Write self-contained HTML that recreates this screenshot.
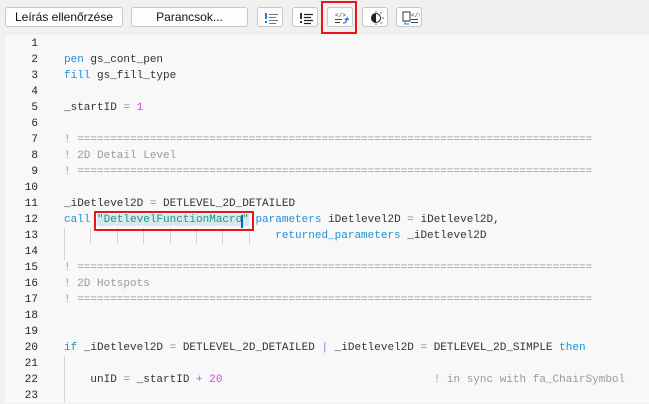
<!DOCTYPE html>
<html><head><meta charset="utf-8"><style>
body{margin:0;width:649px;height:403px;background:#f0f0f0;position:relative;overflow:hidden;font-family:"Liberation Sans",sans-serif}
.btn{position:absolute;top:7px;height:20px;background:#fdfdfd;border:1px solid #c8c8c8;border-radius:3px;box-sizing:border-box;font-size:12px;color:#111;text-align:center;line-height:18px}
.ib{width:26px}
.ib svg{position:absolute;left:5px;top:3px}
#ed{position:absolute;left:5px;top:35px;width:644px;height:368px;background:#f8f8f8}
.ln{position:absolute;left:0;width:33px;text-align:right;font:11px/16px "Liberation Mono",monospace;color:#222}
.cd{position:absolute;left:59px;font:11px/16px "Liberation Mono",monospace;color:#333;white-space:pre}
.k{color:#1b93d8}.n{color:#e23de0}.c{color:#9a9a9a}.s{color:#1a9a7a;background:#d8e8f3}.o{color:#a070d0}
.g{position:absolute;width:1px;background:#d4d4d4}
</style></head><body>
<div class="btn" style="left:5px;width:118px">Leírás ellenőrzése</div>
<div class="btn" style="left:131px;width:117px">Parancsok...</div>
<div class="btn ib" style="left:257px"><svg width="16" height="14"><rect x="2" y="2" width="2" height="6" fill="#1e7be0"/><rect x="2" y="10" width="2" height="2" fill="#1e7be0"/><g stroke="#777" stroke-width="1"><line x1="6" y1="3.5" x2="15" y2="3.5"/><line x1="6" y1="6.5" x2="13" y2="6.5"/><line x1="6" y1="9.5" x2="15" y2="9.5"/><line x1="6" y1="12.5" x2="13" y2="12.5"/></g></svg></div>
<div class="btn ib" style="left:292px"><svg width="16" height="14"><rect x="2" y="2" width="2" height="6" fill="#333"/><rect x="2" y="10" width="2" height="2" fill="#333"/><g stroke="#222" stroke-width="1.2"><line x1="6" y1="3.5" x2="15" y2="3.5"/><line x1="6" y1="6.5" x2="13" y2="6.5"/><line x1="6" y1="9.5" x2="15" y2="9.5"/><line x1="6" y1="12.5" x2="13" y2="12.5"/></g></svg></div>
<div style="position:absolute;left:321px;top:1px;width:36px;height:33px;border:2px solid #e8141c;box-sizing:border-box"></div>
<div class="btn ib" style="left:327px"><svg width="16" height="14"><text x="2" y="6" font-size="6" font-family="Liberation Mono" fill="#333">&lt;/&gt;</text><g stroke="#444"><line x1="2" y1="8.5" x2="9" y2="8.5"/><line x1="2" y1="11.5" x2="7" y2="11.5"/></g><path d="M10 12 q4 0 4-5 l-2 2 m2-2 l2 2" stroke="#1e7be0" fill="none" stroke-width="1.2"/></svg></div>
<div class="btn ib" style="left:362px"><svg width="16" height="14"><circle cx="8" cy="7" r="4.5" fill="none" stroke="#222"/><path d="M8 2.5a4.5 4.5 0 0 0 0 9z" fill="#222"/><g stroke="#555"><line x1="14" y1="7" x2="16" y2="7"/><line x1="8" y1="0" x2="8" y2="1.5"/><line x1="8" y1="12.5" x2="8" y2="14"/><line x1="12.5" y1="2.5" x2="13.5" y2="1.5"/><line x1="12.5" y1="11.5" x2="13.5" y2="12.5"/></g></svg></div>
<div class="btn ib" style="left:396px"><svg width="18" height="15"><rect x="1" y="1" width="7" height="9" fill="none" stroke="#333"/><path d="M3 10v3h4" stroke="#1e7be0" fill="none"/><text x="9" y="6" font-size="6" font-family="Liberation Mono" fill="#333">&lt;/&gt;</text><g stroke="#444"><line x1="9" y1="8.5" x2="16" y2="8.5"/><line x1="9" y1="11.5" x2="16" y2="11.5"/></g></svg></div>
<div id="ed">
<div class="ln" style="top:1px">1<br>2<br>3<br>4<br>5<br>6<br>7<br>8<br>9<br>10<br>11<br>12<br>13<br>14<br>15<br>16<br>17<br>18<br>19<br>20<br>21<br>22<br>23</div>
<div class="g" style="left:59px;top:193px;height:32px"></div>
<div class="g" style="left:85px;top:193px;height:16px"></div><div class="g" style="left:112px;top:193px;height:16px"></div><div class="g" style="left:138px;top:193px;height:16px"></div><div class="g" style="left:165px;top:193px;height:16px"></div><div class="g" style="left:191px;top:193px;height:16px"></div><div class="g" style="left:217px;top:193px;height:16px"></div><div class="g" style="left:244px;top:193px;height:16px"></div>
<div class="g" style="left:59px;top:321px;height:47px"></div>
<div class="cd" style="top:1px">
<span class="k">pen</span> gs_cont_pen
<span class="k">fill</span> gs_fill_type

_startID <span class="o">=</span> <span class="n">1</span>

<span class="c">! ==============================================================================
! 2D Detail Level
! ==============================================================================</span>

_iDetlevel2D <span class="o">=</span> DETLEVEL_2D_DETAILED
<span class="k">call</span> <span class="s">"DetlevelFunctionMacro"</span> <span class="k">parameters</span> iDetlevel2D <span class="o">=</span> iDetlevel2D,
                                <span class="k">returned_parameters</span> _iDetlevel2D

<span class="c">! ==============================================================================
! 2D Hotspots
! ==============================================================================</span>


<span class="k">if</span> _iDetlevel2D <span class="o">=</span> DETLEVEL_2D_DETAILED <span class="o">|</span> _iDetlevel2D <span class="o">=</span> DETLEVEL_2D_SIMPLE <span class="k">then</span>

    unID <span class="o">=</span> _startID <span class="o">+</span> <span class="n">20</span>                                <span class="c">! in sync with fa_ChairSymbol</span>
</div>
<div style="position:absolute;left:89px;top:176px;width:160px;height:20px;border:2px solid #e8141c;box-sizing:border-box"></div>
<div style="position:absolute;left:236px;top:180px;width:2px;height:13px;background:#1060c0"></div>
</div>
</body></html>
